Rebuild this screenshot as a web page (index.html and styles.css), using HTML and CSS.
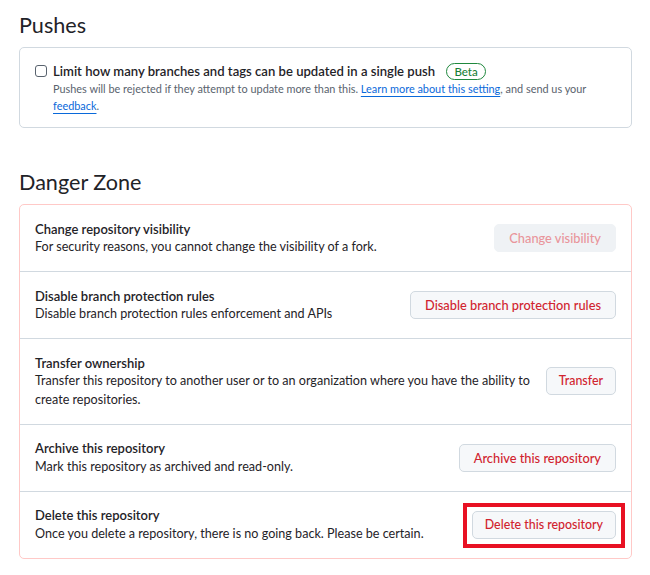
FILE: index.html
```html
<!DOCTYPE html>
<html lang="en">
<head>
<meta charset="utf-8">
<title>Repository settings</title>
<link rel="stylesheet" href="styles.css">
</head>
<body>
<main class="settings">
  <h2 class="subhead">Pushes</h2>
  <div class="box">
    <div class="check-row">
      <input type="checkbox" class="check" id="limit-push">
      <div class="check-body">
        <label for="limit-push" class="check-label">Limit how many branches and tags can be updated in a single push <span class="badge">Beta</span></label>
        <p class="note">Pushes will be rejected if they attempt to update more than this. <a href="#">Learn more about this setting</a>, and send us your <a href="#">feedback</a>.</p>
      </div>
    </div>
  </div>

  <h2 class="subhead danger-head">Danger Zone</h2>
  <div class="box danger">
    <div class="row">
      <div class="info">
        <strong class="title">Change repository visibility</strong>
        <p class="desc">For security reasons, you cannot change the visibility of a fork.</p>
      </div>
      <button class="btn" disabled>Change visibility</button>
    </div>
    <div class="row">
      <div class="info">
        <strong class="title">Disable branch protection rules</strong>
        <p class="desc">Disable branch protection rules enforcement and APIs</p>
      </div>
      <button class="btn">Disable branch protection rules</button>
    </div>
    <div class="row">
      <div class="info">
        <strong class="title">Transfer ownership</strong>
        <p class="desc">Transfer this repository to another user or to an organization where you have the ability to create repositories.</p>
      </div>
      <button class="btn btn-narrow">Transfer</button>
    </div>
    <div class="row">
      <div class="info">
        <strong class="title">Archive this repository</strong>
        <p class="desc">Mark this repository as archived and read-only.</p>
      </div>
      <button class="btn">Archive this repository</button>
    </div>
    <div class="row">
      <div class="info">
        <strong class="title">Delete this repository</strong>
        <p class="desc">Once you delete a repository, there is no going back. Please be certain.</p>
      </div>
      <button class="btn btn-narrow highlighted">Delete this repository</button>
    </div>
  </div>
</main>
</body>
</html>
```
FILE: styles.css
```css
* { box-sizing: border-box; }

body {
  margin: 0;
  background: #ffffff;
  color: #1f2328;
  font-family: Lato, "Segoe UI", "Noto Sans", sans-serif;
  font-size: 12.6px;
}

.settings {
  width: 632px;
  padding: 12px 0 0 19px;
}

.subhead {
  margin: 0 0 8px;
  font-size: 21.6px;
  line-height: 27px;
  font-weight: 400;
  color: #1f2328;
}

.danger-head {
  margin-top: 41px;
}

.box {
  border: 1px solid #d1d9e0;
  border-radius: 5px;
  background: #ffffff;
}

.check-row {
  display: flex;
  align-items: flex-start;
  gap: 6px;
  padding: 14px 15px 13px;
}

.check {
  appearance: none;
  -webkit-appearance: none;
  margin: 3px 0 0;
  width: 12px;
  height: 12px;
  flex: none;
  border: 1px solid #59636e;
  border-radius: 3px;
  background: #ffffff;
}

.check-body {
  flex: 1;
}

.check-label {
  display: block;
  font-size: 13.1px;
  font-weight: 600;
  line-height: 18px;
  color: #1f2328;
}

.badge {
  display: inline-block;
  margin-left: 8px;
  padding: 0 7px;
  border: 1px solid #1f883d;
  border-radius: 999px;
  color: #1a7f37;
  font-size: 11.5px;
  font-weight: 500;
  line-height: 15px;
  vertical-align: 0;
}

.note {
  margin: 0;
  font-size: 10.9px;
  line-height: 17px;
  color: #59636e;
}

.note a {
  color: #0969da;
  text-decoration: underline;
  text-underline-offset: 3px;
}

.danger {
  border-color: #ffc9c7;
}

.row {
  display: flex;
  align-items: center;
  gap: 8px;
  padding: 14.5px 15px;
  border-top: 1px solid #d1d9e0;
}

.row:first-child {
  border-top: none;
}

.info {
  flex: 1;
  min-width: 0;
}

.title {
  display: block;
  font-size: 13px;
  font-weight: 600;
  line-height: 18.5px;
}

.desc {
  margin: 0;
  line-height: 18.5px;
}

.btn {
  position: relative;
  flex: none;
  height: 28px;
  padding: 0 14px;
  border: 1px solid #d1d9e0;
  border-radius: 5px;
  background: #f6f8fa;
  color: #d1242f;
  font-family: inherit;
  font-size: 12.8px;
  font-weight: 500;
  line-height: 26px;
  cursor: pointer;
}

.btn-narrow {
  padding: 0 12px;
  font-size: 12.4px;
}

.btn:disabled {
  border-color: #eff2f5;
  background: #eff2f5;
  color: #e9959b;
  cursor: default;
}

.highlighted::after {
  content: "";
  position: absolute;
  top: -9px;
  right: -10px;
  bottom: -10px;
  left: -10px;
  border: 4px solid #e81123;
  pointer-events: none;
}
```
